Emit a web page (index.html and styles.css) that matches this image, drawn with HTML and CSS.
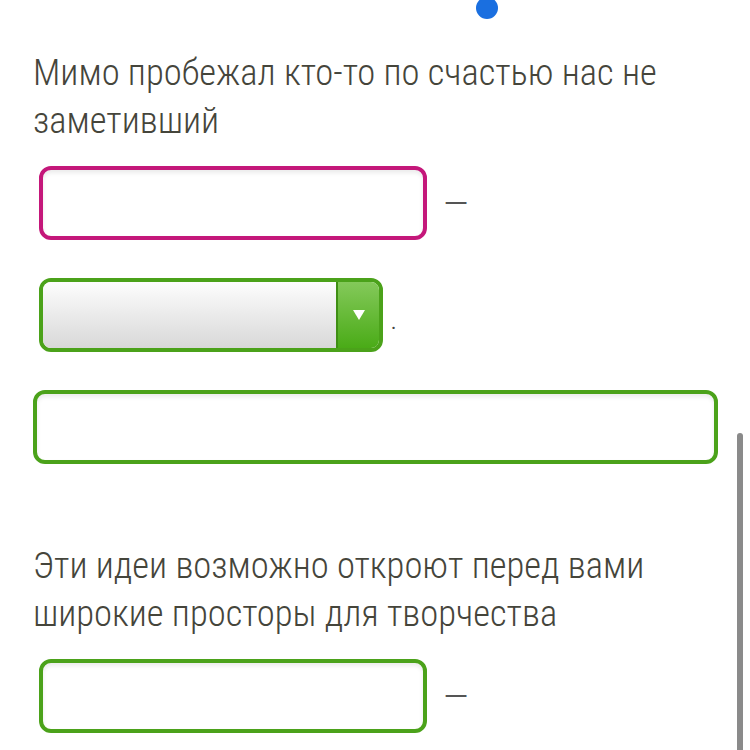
FILE: index.html
```html
<!DOCTYPE html>
<html lang="ru">
<head>
  <meta charset="UTF-8">
  <meta name="viewport" content="width=device-width, initial-scale=1.0">
  <title>Задание</title>
  <link rel="stylesheet" href="styles.css">
</head>
<body>
  <div class="dot"></div>
  <div class="scrollbar"></div>

  <div class="page">
    <div class="task">
      <p class="question">Мимо пробежал кто-то по счастью нас не заметивший</p>
      <div class="row">
        <input type="text" class="field field-wrong">
        <span class="sep">—</span>
      </div>
      <div class="row">
        <div class="select">
          <div class="select-body"></div>
          <div class="select-btn">
            <svg width="14" height="12" viewBox="0 0 14 12"><path d="M1 1 L13 1 L7 11 Z" fill="#fff"/></svg>
          </div>
        </div>
        <span class="dot-mark">.</span>
      </div>
      <div class="row">
        <input type="text" class="field field-ok field-wide">
      </div>
    </div>

    <div class="task">
      <p class="question">Эти идеи возможно откроют перед вами широкие просторы для творчества</p>
      <div class="row">
        <input type="text" class="field field-ok">
        <span class="sep">—</span>
      </div>
    </div>
  </div>
</body>
</html>
```

FILE: styles.css
```css
body {
  margin: 0;
  background: #fff;
  font-family: "Roboto Condensed", "Liberation Sans Narrow", "DejaVu Sans Condensed", sans-serif;
  color: #45453b;
  overflow: hidden;
}
.dot {
  position: absolute;
  left: 476px;
  top: -3px;
  width: 22px;
  height: 22px;
  border-radius: 50%;
  background: #1a6fe0;
}
.scrollbar {
  position: absolute;
  left: 737px;
  top: 433px;
  width: 6px;
  height: 330px;
  border-radius: 3px 3px 0 0;
  background: #8a8a8a;
}
.page {
  padding: 49px 0 0 33px;
}
.task {
  display: flex;
  flex-direction: column;
  gap: 38px;
}
.task + .task {
  margin-top: 78px;
}
.question {
  margin: 0 0 -17px;
  font-size: 36.6px;
  font-weight: 300;
  line-height: 48px;
  width: 660px;
}
.row {
  display: flex;
  align-items: center;
}
.field {
  box-sizing: border-box;
  width: 388px;
  height: 74px;
  margin: 0 0 0 6px;
  border: 4px solid #4ba21a;
  border-radius: 12px;
  background: #fff;
  box-shadow: inset 0 3px 4px rgba(0, 0, 0, 0.08);
  outline: none;
}
.field-wrong {
  border-color: #c4177a;
}
.field-wide {
  width: 685px;
  margin-left: 0;
}
.sep {
  margin: 2px 0 0 16px;
  font-size: 38px;
  font-weight: 300;
  color: #555;
}
.select {
  display: flex;
  box-sizing: border-box;
  width: 344px;
  height: 74px;
  margin-left: 6px;
  border: 4px solid #4ba21a;
  border-radius: 12px;
  overflow: hidden;
}
.select-body {
  flex: 1;
  background: linear-gradient(#fdfdfd, #d8d8d8);
}
.select-btn {
  width: 41px;
  display: flex;
  align-items: center;
  justify-content: center;
  border-left: 2px solid #3f8f14;
  background: linear-gradient(#84c95a, #4aab17);
}
.dot-mark {
  margin: 14px 0 0 8px;
  font-size: 20px;
  color: #444;
}
```
